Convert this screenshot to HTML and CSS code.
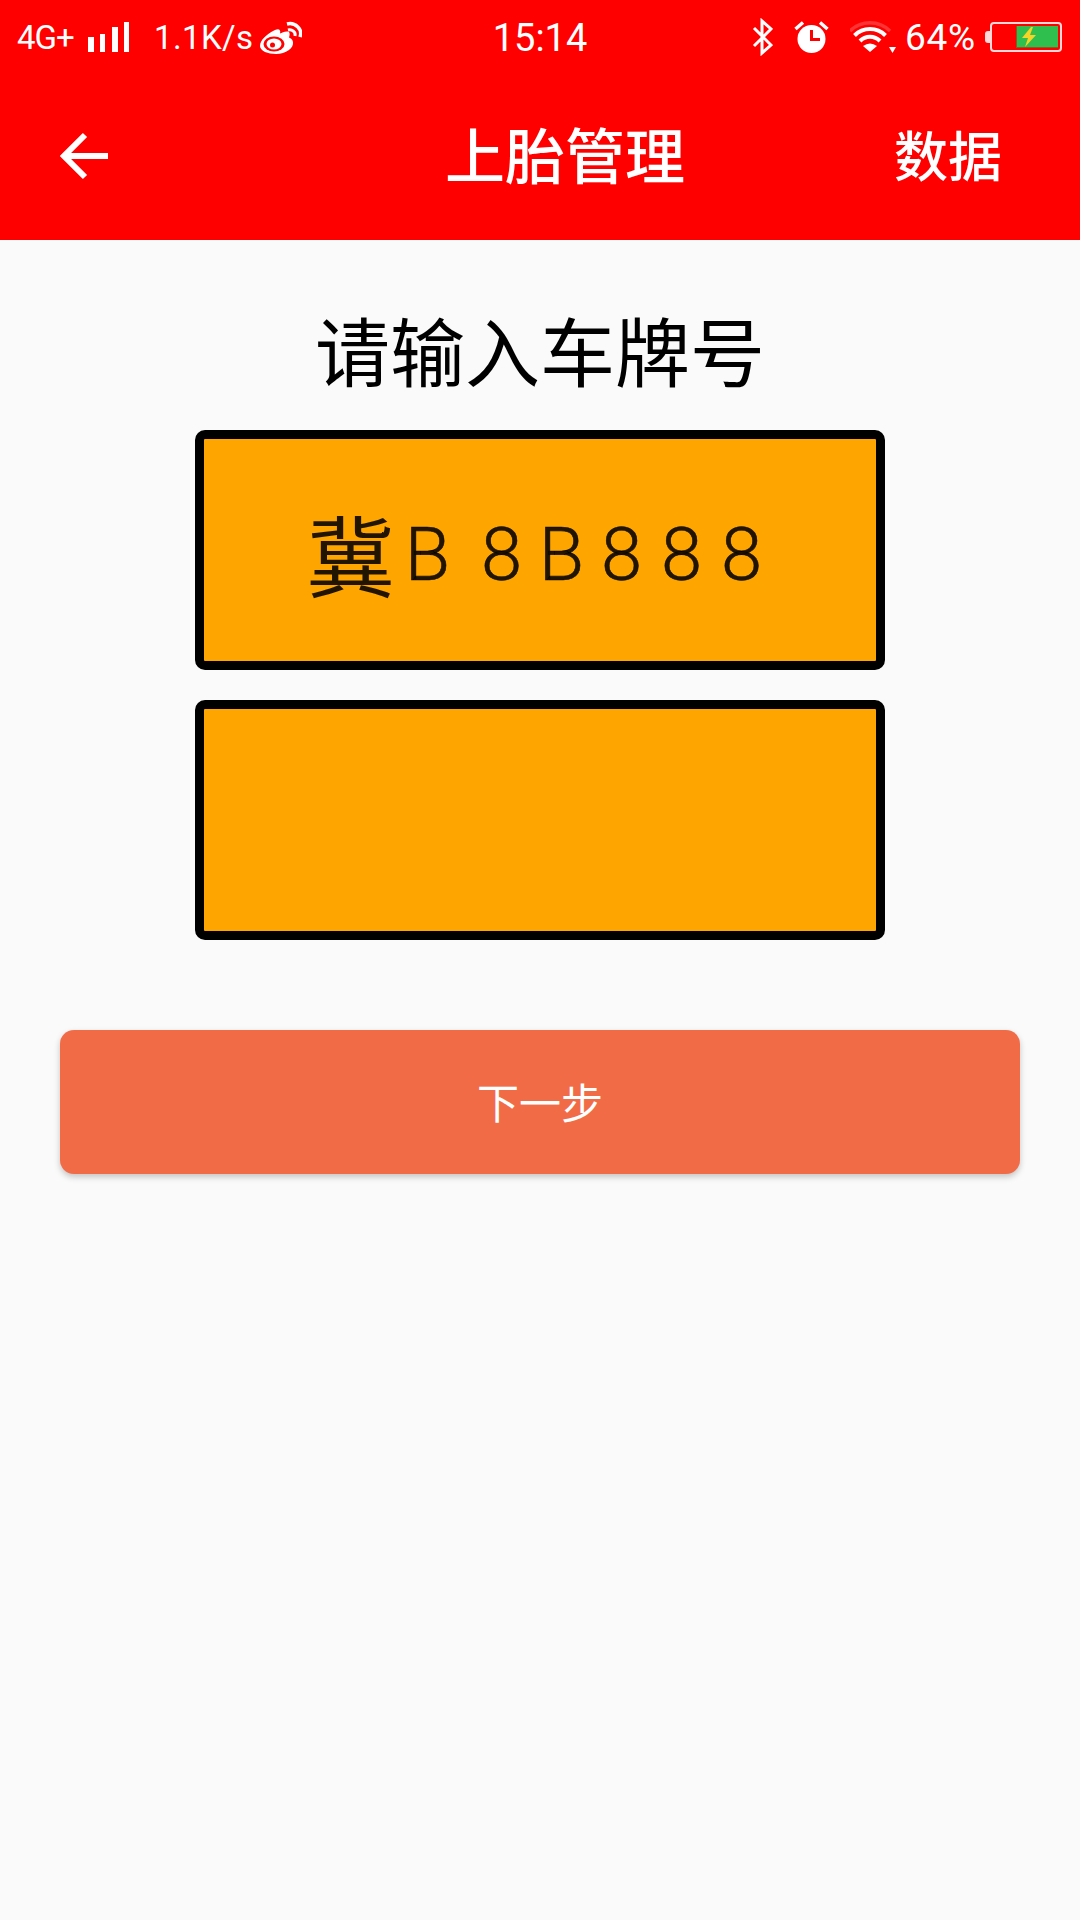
FILE: index.html
```html
<!DOCTYPE html>
<html lang="zh-CN">
<head>
<meta charset="utf-8">
<title>上胎管理</title>
<link rel="stylesheet" href="styles.css">
</head>
<body>
<div class="app">
  <header class="header">
    <div class="status">
      <div class="status-left">
        <span class="net">4G+</span>
        <svg class="signal" width="41" height="30" viewBox="0 0 41 30" fill="#fff"><rect x="0" y="15" width="6" height="15"/><rect x="12" y="12" width="5" height="18"/><rect x="24" y="5" width="6" height="25"/><rect x="36" y="0" width="5" height="30"/></svg>
        <span class="speed">1.1K/s</span>
        <svg class="weibo" width="42" height="33" viewBox="0 0 42 33"><path fill="#fff" d="M15 9C7 13 0 19 0 25C0 30 8 33 16 33C26 33 34 27 33 21C32.500 18 30 17 29 16.500C30 14 30 11 28 10.500C25 10 22 11.500 20 12.500C21 9 19 7 15 9Z"/><ellipse cx="14" cy="23" rx="10.500" ry="7.500" fill="#f00"/><ellipse cx="14" cy="23" rx="7.500" ry="5.500" fill="#fff"/><circle cx="12.500" cy="24" r="2.500" fill="#f00"/><path fill="none" stroke="#fff" stroke-width="3.500" d="M27 3C35 1 43 8 40 16"/><path fill="none" stroke="#fff" stroke-width="3" d="M28 9C32 8 36 11 35 15"/></svg>
      </div>
      <div class="clock">15:14</div>
      <div class="status-right">
        <svg class="bt" width="21" height="38" viewBox="0 0 21 38"><path fill="none" stroke="#fff" stroke-width="3" d="M2 10L19 27L10 35V3L19 11L2 28"/></svg>
        <svg class="alarm" width="35" height="32" viewBox="0 0 35 32"><circle cx="17.500" cy="18" r="14" fill="#fff"/><path fill="none" stroke="#f00" stroke-width="3" d="M17.500 9V18.500H26"/><path fill="none" stroke="#fff" stroke-width="3.500" d="M1.500 8L9 1.500M33.500 8L26 1.500"/></svg>
        <svg class="wifi" width="46" height="32" viewBox="0 0 46 32"><path fill="none" stroke="#fff" stroke-opacity=".2" stroke-width="3.500" d="M0 10A28.500 28.500 0 0 1 40 10"/><path fill="none" stroke="#fff" stroke-width="4" d="M4.500 14.500A22 22 0 0 1 35.500 14.500"/><path fill="none" stroke="#fff" stroke-width="4" d="M10 20A14 14 0 0 1 30 20"/><path fill="#fff" d="M13 25Q20 20 27 25L20 31Z"/><path fill="#fff" d="M39 26H46L42.500 32Z"/></svg>
        <span class="pct">64%</span>
        <div class="battery-wrap">
          <span class="nub"></span>
          <div class="battery">
            <div class="charge">
              <svg width="16" height="20" viewBox="0 0 16 20"><path fill="#f5d327" d="M10 0L1 11H7L4 20L15 8H9L12 0Z"/></svg>
            </div>
          </div>
        </div>
      </div>
    </div>
    <div class="bar">
      <svg class="back" width="48" height="48" viewBox="0 0 48 48"><path fill="none" stroke="#fff" stroke-width="6" d="M48 24H4M25 3L4 24L25 45"/></svg>
      <h1 class="title">上胎管理</h1>
      <span class="action">数据</span>
    </div>
  </header>
  <main class="main">
    <h2 class="prompt">请输入车牌号</h2>
    <div class="plate">
      <span class="cjk">冀</span>
      <span class="ch ch-first">B</span>
      <span class="ch">8</span>
      <span class="ch">B</span>
      <span class="ch">8</span>
      <span class="ch">8</span>
      <span class="ch">8</span>
    </div>
    <div class="plate"></div>
    <div class="next">下一步</div>
  </main>
</div>
</body>
</html>
```
FILE: styles.css
```css
* { box-sizing: border-box; }
html, body { margin: 0; padding: 0; }
body {
  width: 1080px;
  height: 1920px;
  background: #fafafa;
  font-family: Roboto, "Noto Sans CJK SC", sans-serif;
  overflow: hidden;
}
.app { display: flex; flex-direction: column; height: 1920px; }
.header { background: #f00; color: #fff; height: 240px; flex: none; }
.status {
  height: 72px;
  display: grid;
  grid-template-columns: 1fr auto 1fr;
  align-items: center;
}
.status-left { display: flex; align-items: center; padding-left: 17px; }
.status-right { display: flex; align-items: center; justify-content: flex-end; padding-right: 18px; }
.net { font-size: 33px; letter-spacing: -1px; width: 71px; }
.signal { margin-right: 25px; }
.speed { font-size: 33px; width: 106px; letter-spacing: .4px; }
.clock { font-size: 38px; line-height: 72px; padding-top: 2px; }
.bt { margin-right: 21px; }
.alarm { margin-right: 21px; }
.wifi { margin-right: 9px; }
.pct { font-size: 37px; letter-spacing: .8px; margin-right: 9px; }
.battery-wrap { display: flex; align-items: center; }
.nub { width: 5px; height: 12px; background: rgba(255,255,255,.85); border-radius: 3px 0 0 3px; }
.battery {
  width: 72px;
  height: 30px;
  border: 2px solid #ffd9d9;
  border-radius: 4px;
  padding: 2px;
  display: flex;
  justify-content: flex-end;
}
.charge {
  width: 42px;
  background: #2fbf4f;
  display: flex;
  align-items: center;
  padding-left: 4px;
  border: 1px solid #8a5a20;
  border-width: 0 0 1px 1px;
}
.bar { height: 168px; display: flex; align-items: center; padding: 0 0 0 60px; }
.back { flex: none; }
.title { margin: 6px 0 0 337px; font-size: 60px; font-weight: 500; line-height: 1; width: 240px; white-space: nowrap; }
.action { margin: 6px 0 0 209px; font-size: 54px; font-weight: 500; line-height: 1; }
.main { display: flex; flex-direction: column; padding-top: 67px; align-items: center; }
.prompt {
  margin: 0 0 39px;
  font-size: 75px;
  font-weight: 400;
  line-height: 84px;
  color: #000;
  font-family: "Noto Sans CJK SC", sans-serif;
}
.plate {
  width: 690px;
  height: 240px;
  background: #ffa500;
  border: 9px solid #000;
  border-radius: 10px;
  margin-bottom: 30px;
  display: flex;
  align-items: center;
  justify-content: center;
  color: rgba(0,0,0,.87);
  padding-top: 10px;
}
.cjk { font-family: "Noto Sans CJK SC", sans-serif; font-size: 88px; width: 84px; line-height: 1; margin: -6px 5px 0 0; text-align: center; font-weight: 400; display: flex; justify-content: center; white-space: nowrap; }
.ch { font-family: Roboto, sans-serif; font-weight: 300; font-size: 74px; -webkit-text-stroke: .6px rgba(0,0,0,.87); width: 60px; text-align: center; line-height: 1; }
.ch-first { margin-right: 14px; }
.next {
  width: 960px;
  height: 144px;
  margin-top: 60px;
  background: #f26b47;
  border-radius: 14px;
  box-shadow: 0 3px 6px rgba(0,0,0,.22);
  color: #fff;
  font-size: 42px;
  font-family: "Noto Sans CJK SC", sans-serif;
  font-weight: 400;
  display: flex;
  align-items: center;
  justify-content: center;
  padding-bottom: 4px;
}
```
